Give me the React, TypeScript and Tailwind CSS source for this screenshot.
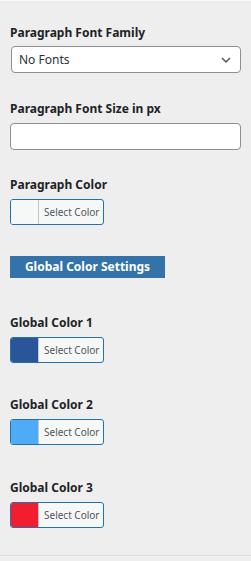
const FONT = "font-['Noto_Sans','Open_Sans',sans-serif]";

function ColorPicker({ color }: { color: string }) {
  return (
    <button
      type="button"
      className="mt-[6px] flex h-[26px] w-[94px] overflow-hidden rounded-[3px] border border-[#2271b1] bg-[#f6f7f7]"
    >
      <span className="h-full w-[28px] border-r border-[#c3c4c7]" style={{ background: color }} />
      <span className="flex flex-1 items-center pl-[5px] text-[10px] text-[#50575e]">Select Color</span>
    </button>
  );
}

function Label({ children }: { children: string }) {
  return <div className="text-[12px] leading-[16px] font-bold text-[#1d2327]">{children}</div>;
}

export default function App() {
  return (
    <div className={`h-[561px] w-[251px] border-t border-[#f7f7f7] bg-[#eeeeee] ${FONT}`}>
      <div className="px-[10px] pt-[24px]">
        <Label>Paragraph Font Family</Label>
        <div className="mt-[5px] ml-[1px] flex h-[27px] items-center justify-between rounded-[4px] border border-[#8c8f94] bg-white pr-[8px] pl-[7px]">
          <span className="text-[12px] text-[#2c3338]">No Fonts</span>
          <svg width="12" height="12" viewBox="0 0 12 12" fill="none">
            <path d="M2 4l4 4 4-4" stroke="#50575e" strokeWidth="1.5" />
          </svg>
        </div>

        <div className="mt-[28px]">
          <Label>Paragraph Font Size in px</Label>
          <input
            type="text"
            className="mt-[6px] block h-[27px] w-full rounded-[4px] border border-[#8c8f94] bg-white"
          />
        </div>

        <div className="mt-[27px]">
          <Label>Paragraph Color</Label>
          <ColorPicker color="#f6f7f7" />
        </div>

        <div className="mt-[31px] flex h-[22px] w-[155px] items-center justify-center bg-[#3373aa] text-[12px] font-bold text-white">
          Global Color Settings
        </div>

        <div className="mt-[37px]">
          <Label>Global Color 1</Label>
          <ColorPicker color="#2a5599" />
        </div>

        <div className="mt-[34px]">
          <Label>Global Color 2</Label>
          <ColorPicker color="#4fabf5" />
        </div>

        <div className="mt-[35px]">
          <Label>Global Color 3</Label>
          <ColorPicker color="#f21d2f" />
        </div>
      </div>
      <div className="mt-[27px] border-t border-[#dcdcde]" />
    </div>
  );
}
